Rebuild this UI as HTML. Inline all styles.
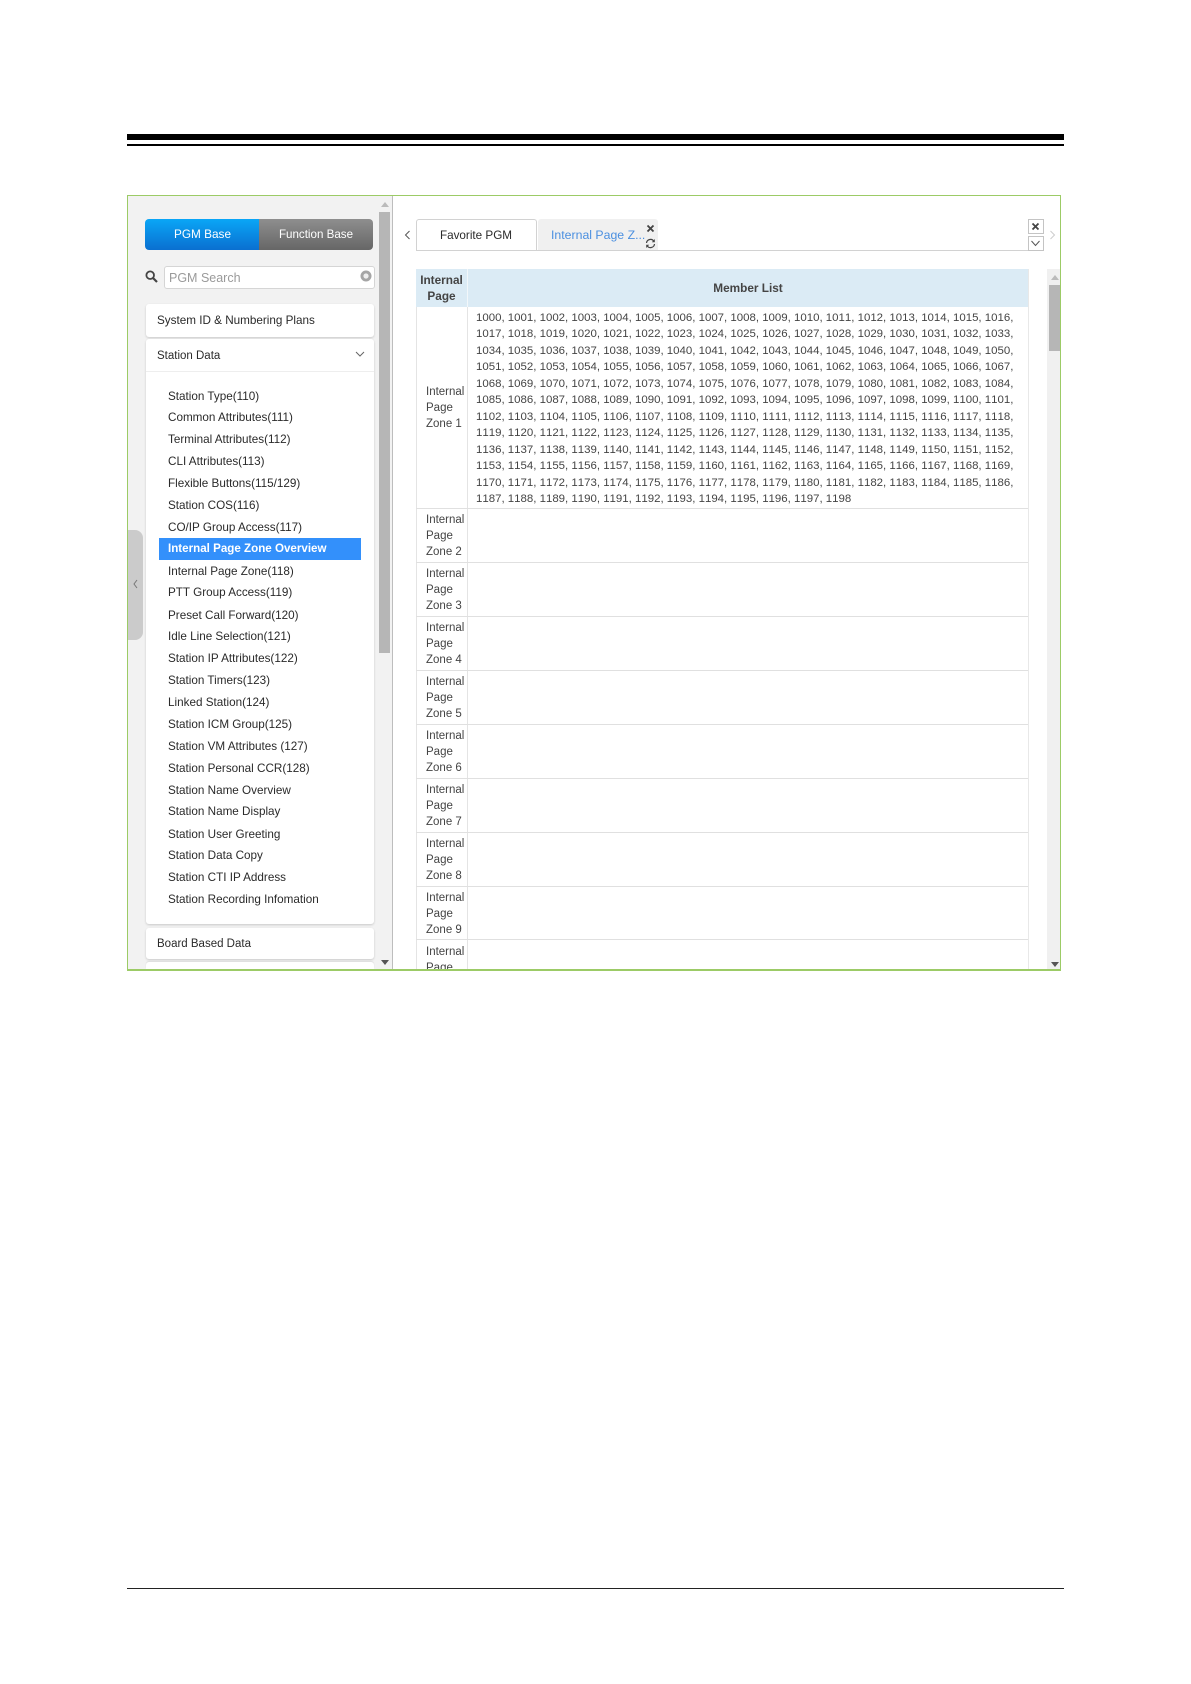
<!DOCTYPE html>
<html>
<head>
<meta charset="utf-8">
<style>
html,body{margin:0;padding:0;background:#fff;}
body{width:1191px;height:1684px;position:relative;overflow:hidden;font-family:"Liberation Sans",sans-serif;color:#222;filter:blur(0.3px);}
.a{position:absolute;box-sizing:border-box;}
.t{position:absolute;white-space:nowrap;line-height:16px;}
.panel{position:absolute;left:145.5px;width:228.5px;background:#fff;border-radius:3px;box-shadow:0 1px 2px #c9c9c9;}
.m{position:absolute;left:168px;font-size:11.7px;line-height:16px;white-space:nowrap;color:#2a2a2a;}
.z{position:absolute;left:426px;font-size:11.5px;line-height:16.2px;color:#444;white-space:nowrap;}
.hl{position:absolute;left:416px;width:612px;height:1px;background:#e0e0e0;}
#list{position:absolute;left:476px;top:310px;font-size:11.45px;line-height:16.45px;color:#444;white-space:nowrap;font-kerning:none;}
</style>
</head>
<body>
<!-- page rules -->
<div class="a" style="left:127px;top:134px;width:937px;height:6px;background:#000"></div>
<div class="a" style="left:127px;top:144px;width:937px;height:2px;background:#000"></div>
<div class="a" style="left:127px;top:1588px;width:937px;height:1px;background:#222"></div>

<!-- main frame -->
<div class="a" style="left:127px;top:195px;width:934px;height:776px;border:1px solid #9ccb66;border-bottom:2px solid #9ccb66;overflow:hidden;background:#fff"></div>

<!-- left side -->
<div class="a" style="left:128px;top:196px;width:264px;height:773px;background:#f2f2f2;overflow:hidden">
</div>
<div class="a" style="left:392px;top:196px;width:1px;height:773px;background:#bdbdbd"></div>
<div class="a" style="left:128px;top:530px;width:15px;height:110px;background:#cbcbcb;border-radius:0 8px 8px 0"></div>
<svg class="a" style="left:132px;top:579px" width="7" height="10" viewBox="0 0 7 10"><path d="M5 1 L2 5 L5 9" fill="none" stroke="#777" stroke-width="1"/></svg>

<div class="a" style="left:379px;top:212px;width:11px;height:441px;background:#b6b6b6"></div>
<svg class="a" style="left:381px;top:202px" width="8" height="6"><path d="M0 5 L4 0 L8 5Z" fill="#bbb"/></svg>

<div class="a" style="left:145px;top:219px;width:114px;height:31px;border-radius:4px 0 0 4px;background:linear-gradient(#0aa6f6,#0a6fd0);color:#fff;font-size:11.8px;line-height:31px;text-align:center;padding-left:1px">PGM Base</div>
<div class="a" style="left:259px;top:219px;width:114px;height:31px;border-radius:0 4px 4px 0;background:linear-gradient(#8e8e8e,#666);color:#fff;font-size:11.6px;line-height:31px;text-align:center">Function Base</div>

<svg class="a" style="left:145px;top:270px" width="13" height="13" viewBox="0 0 13 13"><circle cx="5.2" cy="5.2" r="3.8" fill="none" stroke="#444" stroke-width="1.8"/><path d="M8 8 L12 12" stroke="#444" stroke-width="2.2"/></svg>
<div class="a" style="left:164px;top:266px;width:211px;height:22.5px;background:#fff;border:1px solid #d5d5d5;border-radius:3px"></div>
<div class="t" style="left:169px;top:270px;font-size:12.5px;color:#9a9a9a">PGM Search</div>
<svg class="a" style="left:360px;top:270px" width="12" height="12" viewBox="0 0 12 12"><circle cx="6" cy="6" r="5.5" fill="#a5a5a5"/><circle cx="6" cy="6" r="2.6" fill="#eee"/></svg>

<div class="panel" style="top:304px;height:33px"></div>
<div class="t" style="left:157px;top:313px;font-size:11.7px;color:#2a2a2a">System ID &amp; Numbering Plans</div>
<div class="panel" style="top:339px;height:585px"></div>
<div class="a" style="left:146px;top:371px;width:228px;height:1px;background:#eee"></div>
<div class="t" style="left:157px;top:348px;font-size:11.5px;color:#2a2a2a">Station Data</div>
<svg class="a" style="left:355px;top:351px" width="10" height="7" viewBox="0 0 10 7"><path d="M1 1 L5 5 L9 1" fill="none" stroke="#666" stroke-width="1"/></svg>

<div class="a" style="left:159px;top:538px;width:202px;height:22px;background:#3390fb"></div>

<div class="m" style="top:389px">Station Type(110)</div>
<div class="m" style="top:410px">Common Attributes(111)</div>
<div class="m" style="top:432px">Terminal Attributes(112)</div>
<div class="m" style="top:454px">CLI Attributes(113)</div>
<div class="m" style="top:476px">Flexible Buttons(115/129)</div>
<div class="m" style="top:498px">Station COS(116)</div>
<div class="m" style="top:520px">CO/IP Group Access(117)</div>
<div class="m" style="top:541px;color:#fff;font-weight:bold;font-size:11.6px">Internal Page Zone Overview</div>
<div class="m" style="top:564px">Internal Page Zone(118)</div>
<div class="m" style="top:585px">PTT Group Access(119)</div>
<div class="m" style="top:608px">Preset Call Forward(120)</div>
<div class="m" style="top:629px">Idle Line Selection(121)</div>
<div class="m" style="top:651px">Station IP Attributes(122)</div>
<div class="m" style="top:673px">Station Timers(123)</div>
<div class="m" style="top:695px">Linked Station(124)</div>
<div class="m" style="top:717px">Station ICM Group(125)</div>
<div class="m" style="top:739px">Station VM Attributes (127)</div>
<div class="m" style="top:761px">Station Personal CCR(128)</div>
<div class="m" style="top:783px">Station Name Overview</div>
<div class="m" style="top:804px">Station Name Display</div>
<div class="m" style="top:827px">Station User Greeting</div>
<div class="m" style="top:848px">Station Data Copy</div>
<div class="m" style="top:870px">Station CTI IP Address</div>
<div class="m" style="top:892px">Station Recording Infomation</div>

<div class="panel" style="top:928px;height:31px"></div>
<div class="t" style="left:157px;top:936px;font-size:11.5px;color:#2a2a2a">Board Based Data</div>
<div class="panel" style="top:962px;height:7px;border-radius:3px 3px 0 0;box-shadow:0 -1px 1px #ddd"></div>
<svg class="a" style="left:381px;top:960px" width="8" height="6"><path d="M0 0 L8 0 L4 5Z" fill="#555"/></svg>

<!-- right side tabs -->
<svg class="a" style="left:404px;top:230px" width="7" height="10" viewBox="0 0 7 10"><path d="M5.5 1 L1.5 5 L5.5 9" fill="none" stroke="#555" stroke-width="1"/></svg>
<div class="a" style="left:416px;top:219px;width:121px;height:32px;background:#fff;border:1px solid #d2d2d2;border-bottom:none;border-radius:3px 3px 0 0;font-size:11.7px;line-height:32px;text-align:center;color:#2a2a2a;padding-right:1px">Favorite PGM</div>
<div class="a" style="left:538px;top:219px;width:120px;height:32px;background:#f0f0f0;border-radius:3px 3px 0 0"></div>
<div class="t" style="left:551px;top:227px;font-size:12.3px;color:#4a8fe0">Internal Page Z...</div>
<svg class="a" style="left:646px;top:224px" width="9" height="9" viewBox="0 0 9 9"><path d="M1.5 1.5 L7.5 7.5 M7.5 1.5 L1.5 7.5" stroke="#444" stroke-width="1.8"/></svg>
<svg class="a" style="left:645px;top:238px" width="11" height="11" viewBox="0 0 11 11"><path d="M1.5 5 A4 4 0 0 1 9 3.5 M9.5 6 A4 4 0 0 1 2 7.5" fill="none" stroke="#444" stroke-width="1.2"/><path d="M9.8 1 V4.3 H6.8Z M1.2 10 V6.7 H4.2Z" fill="#444"/></svg>
<div class="a" style="left:416px;top:250px;width:628px;height:1px;background:#d2d2d2"></div>

<div class="a" style="left:1028px;top:219px;width:16px;height:15px;background:#fff;border:1px solid #c4c4c4"></div>
<svg class="a" style="left:1031px;top:222px" width="9" height="9" viewBox="0 0 9 9"><path d="M1.5 1.5 L7.5 7.5 M7.5 1.5 L1.5 7.5" stroke="#444" stroke-width="1.8"/></svg>
<div class="a" style="left:1028px;top:236px;width:16px;height:15px;background:#fff;border:1px solid #c4c4c4"></div>
<svg class="a" style="left:1030px;top:240px" width="11" height="7" viewBox="0 0 11 7"><path d="M1.5 1 L5.5 5.5 L9.5 1" fill="none" stroke="#555" stroke-width="1"/></svg>
<svg class="a" style="left:1049px;top:230px" width="7" height="10" viewBox="0 0 7 10"><path d="M1.5 1 L5.5 5 L1.5 9" fill="none" stroke="#ccc" stroke-width="1"/></svg>

<!-- table -->
<div class="a" style="left:416px;top:269px;width:612px;height:38px;background:#dbebf5"></div>
<div class="a" style="left:467px;top:269px;width:1px;height:38px;background:#f2f7fa"></div>
<div class="t" style="left:416px;width:51px;top:272px;font-size:11.8px;font-weight:bold;text-align:center;color:#444;line-height:16px;white-space:normal">Internal Page</div>
<div class="t" style="left:468px;width:560px;top:280px;font-size:11.8px;font-weight:bold;text-align:center;color:#444">Member List</div>

<div class="a" style="left:416px;top:307px;width:1px;height:662px;background:#e4e4e4"></div>
<div class="a" style="left:467px;top:307px;width:1px;height:662px;background:#e4e4e4"></div>
<div class="a" style="left:1028px;top:269px;width:1px;height:700px;background:#e8e8e8"></div>
<div class="hl" style="top:508px"></div>
<div class="hl" style="top:562px"></div>
<div class="hl" style="top:616px"></div>
<div class="hl" style="top:670px"></div>
<div class="hl" style="top:724px"></div>
<div class="hl" style="top:778px"></div>
<div class="hl" style="top:832px"></div>
<div class="hl" style="top:886px"></div>
<div class="hl" style="top:939px"></div>

<div id="list">1000, 1001, 1002, 1003, 1004, 1005, 1006, 1007, 1008, 1009, 1010, 1011, 1012, 1013, 1014, 1015, 1016,<br>
1017, 1018, 1019, 1020, 1021, 1022, 1023, 1024, 1025, 1026, 1027, 1028, 1029, 1030, 1031, 1032, 1033,<br>
1034, 1035, 1036, 1037, 1038, 1039, 1040, 1041, 1042, 1043, 1044, 1045, 1046, 1047, 1048, 1049, 1050,<br>
1051, 1052, 1053, 1054, 1055, 1056, 1057, 1058, 1059, 1060, 1061, 1062, 1063, 1064, 1065, 1066, 1067,<br>
1068, 1069, 1070, 1071, 1072, 1073, 1074, 1075, 1076, 1077, 1078, 1079, 1080, 1081, 1082, 1083, 1084,<br>
1085, 1086, 1087, 1088, 1089, 1090, 1091, 1092, 1093, 1094, 1095, 1096, 1097, 1098, 1099, 1100, 1101,<br>
1102, 1103, 1104, 1105, 1106, 1107, 1108, 1109, 1110, 1111, 1112, 1113, 1114, 1115, 1116, 1117, 1118,<br>
1119, 1120, 1121, 1122, 1123, 1124, 1125, 1126, 1127, 1128, 1129, 1130, 1131, 1132, 1133, 1134, 1135,<br>
1136, 1137, 1138, 1139, 1140, 1141, 1142, 1143, 1144, 1145, 1146, 1147, 1148, 1149, 1150, 1151, 1152,<br>
1153, 1154, 1155, 1156, 1157, 1158, 1159, 1160, 1161, 1162, 1163, 1164, 1165, 1166, 1167, 1168, 1169,<br>
1170, 1171, 1172, 1173, 1174, 1175, 1176, 1177, 1178, 1179, 1180, 1181, 1182, 1183, 1184, 1185, 1186,<br>
1187, 1188, 1189, 1190, 1191, 1192, 1193, 1194, 1195, 1196, 1197, 1198</div>

<div class="z" style="top:384px">Internal<br>Page<br>Zone 1</div>
<div class="z" style="top:512px">Internal<br>Page<br>Zone 2</div>
<div class="z" style="top:566px">Internal<br>Page<br>Zone 3</div>
<div class="z" style="top:620px">Internal<br>Page<br>Zone 4</div>
<div class="z" style="top:674px">Internal<br>Page<br>Zone 5</div>
<div class="z" style="top:728px">Internal<br>Page<br>Zone 6</div>
<div class="z" style="top:782px">Internal<br>Page<br>Zone 7</div>
<div class="z" style="top:836px">Internal<br>Page<br>Zone 8</div>
<div class="z" style="top:890px">Internal<br>Page<br>Zone 9</div>
<div class="a" style="left:426px;top:944px;width:40px;height:25px;overflow:hidden"><div class="z" style="left:0;top:0">Internal<br>Page</div></div>

<!-- right scrollbar -->
<div class="a" style="left:1047px;top:269px;width:13px;height:700px;background:#f0f0f0"></div>
<div class="a" style="left:1049px;top:285px;width:11px;height:66px;background:#b6b6b6"></div>
<svg class="a" style="left:1051px;top:275px" width="8" height="6"><path d="M0 5 L4 0 L8 5Z" fill="#bbb"/></svg>
<svg class="a" style="left:1051px;top:962px" width="8" height="6"><path d="M0 0 L8 0 L4 5Z" fill="#555"/></svg>
</body>
</html>
